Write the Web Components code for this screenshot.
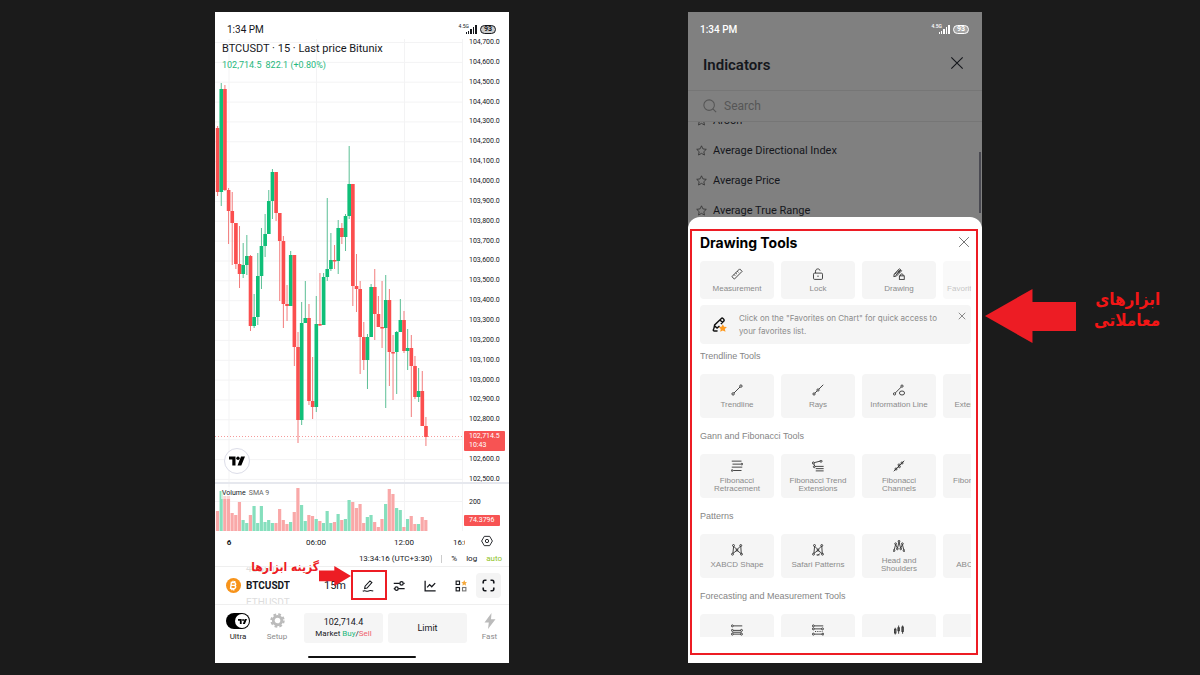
<!DOCTYPE html>
<html lang="en">
<head>
<meta charset="utf-8">
<title>Drawing tools guide</title>
<style>
  body {
    margin: 0;
    background: #1b1b1b;
    font-family: Roboto, "Liberation Sans", sans-serif;
  }
</style>
</head>
<body>
<tools-guide></tools-guide>

<script>
const reset = /*html*/ `
  <style>
    * { box-sizing: border-box; }
    button, input {
      font: inherit;
      color: inherit;
      background: none;
      border: 0;
      padding: 0;
      margin: 0;
      outline: none;
    }
    button { cursor: pointer; }
    svg { display: block; }
  </style>
`;

class BaseElement extends HTMLElement {
  constructor () {
    super();
    this.attachShadow({ mode: 'open' });
  }

  connectedCallback () {
    this.shadowRoot.innerHTML = reset + this.render();
  }

  attr (name, fallback = '') {
    return this.getAttribute(name) || fallback;
  }
}

/* name: markup on a 16 x 16 grid */
const icons = {
  close: '<path d="M1.5 1.5l13 13M14.5 1.5l-13 13"/>',
  search: '<circle cx="7" cy="7" r="6"/><path d="M11.3 11.3L15 15"/>',
  star: '<path d="M8 1.2l2.1 4.5 4.9.6-3.6 3.4.9 4.9L8 12.2l-4.3 2.4.9-4.9L1 6.3l4.9-.6z"/>',
  pen: '<path d="M3.500 11.500l.6-3.200L10.600 1.200l2.600 2.300-6.500 7.200zM1 15c3-2.400 4.600 1.200 7.600-.4 1.600-.9 3.600-.6 6.400 0"/>',
  sliders: '<path d="M1 4.500h8M14 4.500h1.500M1 11.500h1.500M7 11.500h8.500"/><circle cx="11.400" cy="4.500" r="2.200"/><circle cx="4.700" cy="11.500" r="2.200"/>',
  chart: '<path d="M1.500 1v13.500H15.500M4.200 9.800l3.300-3.600 2.800 2.800 4.600-4.800"/>',
  grid: '<rect x="1.500" y="1.500" width="4.500" height="4.500"/><rect x="1.500" y="10" width="4.500" height="4.500"/><rect x="10" y="10" width="4.500" height="4.500" stroke="#777"/><path fill="#f5a83a" stroke="none" d="M12.300 0l1.200 2.600 2.700.3-2 1.900.6 2.700-2.500-1.400-2.400 1.400.5-2.700-2-1.900 2.700-.3z"/>',
  expand: '<path d="M1.500 5.500v-2q0-2 2-2h2M10.500 1.500h2q2 0 2 2v2M14.500 10.500v2q0 2-2 2h-2M5.500 14.500h-2q-2 0-2-2v-2"/>',
  hexagon: '<path d="M4.400 1.800h7.200L15.200 8l-3.600 6.200H4.400L.8 8z"/><circle cx="8" cy="8" r="2.200"/>',
  bolt: '<path fill="currentColor" stroke="none" d="M9.500 0L2.500 9.500h4.300L6 16l7.500-9.800H9z"/>',
  cog: '<circle cx="8" cy="8" r="4.500" stroke-width="3"/><circle cx="8" cy="8" r="6.600" stroke-width="2.200" stroke-dasharray="2.900 2.284"/>',
  ruler: '<path d="M1.200 11.500L11.500 1.200l3.300 3.300L4.500 14.800zM4 8.700l1.600 1.600M6.200 6.500l1.600 1.600M8.400 4.300l1.600 1.600"/>',
  lock: '<rect x="2" y="6.800" width="12" height="8.400" rx="1.500"/><path d="M4.700 6.800V4.300c0-4 5.700-4 6-.7M8 10v2"/>',
  drawlock: '<path d="M1 11.500l.7-3.400L8.500 1l3 2.700-6.800 7zM2.200 8.300l7.600-5.700M3.500 10l7-7.200M6.500 3.500l2.600 2.400"/><rect x="8.500" y="10.500" width="6.500" height="4.700"/><path d="M10 10.500v-1.200c0-2 3.500-2 3.500 0v1.200"/>',
  trendline: '<path d="M4 12l8-8"/><circle cx="2.800" cy="13.200" r="1.600"/><circle cx="13.200" cy="2.800" r="1.600"/>',
  rays: '<path d="M3.800 12.200l3-3M9.200 6.800L15 1"/><circle cx="2.700" cy="13.300" r="1.500"/><circle cx="8" cy="8" r="1.500"/>',
  infoline: '<path d="M3 12l8-8"/><circle cx="2" cy="13.200" r="1.500"/><circle cx="12" cy="2.800" r="1.500"/><ellipse cx="12" cy="12" rx="3.400" ry="2.700"/>',
  retracement: '<path d="M1 1.500h13M2 5.500h11M1 9.500h14M3 14h11"/><circle cx="14.500" cy="5.500" r="1.100"/><circle cx="1.500" cy="14" r="1.100"/>',
  extension: '<path d="M3 3.500L11 1.500M2.500 5l1 3M4 8.500h11.500M5 11.500h10.500M5 14.500h10.500"/><circle cx="1.800" cy="4" r="1.400"/><circle cx="12" cy="1.600" r="1.400"/><circle cx="3" cy="9" r="1.200"/>',
  channels: '<path d="M1 15L15 1"/><circle cx="4" cy="12" r="1.400"/><circle cx="8.500" cy="9" r="1.300"/><circle cx="8" cy="6.500" r="1.300"/><circle cx="12" cy="4" r="1.400"/>',
  xabcd: '<path d="M2.500 12.500L3.500 3l4.500 4.500L13 2.500l.7 10.500L8 8.500z"/><circle cx="2" cy="13.600" r="1.300"/><circle cx="3.300" cy="2" r="1.300"/><circle cx="8" cy="8" r="1.300"/><circle cx="13" cy="2" r="1.300"/><circle cx="14" cy="13.600" r="1.300"/>',
  safari: '<path d="M2.500 12.500L3.500 3l4.500 4.500L13 2.500l.7 10.500L8 8.500zM6 14.500h4M10.500 12.500l-3 3"/><circle cx="2" cy="13.600" r="1.300"/><circle cx="3.300" cy="2" r="1.300"/><circle cx="8" cy="8" r="1.300"/><circle cx="13" cy="2" r="1.300"/><circle cx="14" cy="13.600" r="1.300"/>',
  shoulders: '<path d="M1.500 13.500L3.500 6l2.500 5L8 2.500 10.200 11 12.500 6l2 7.500"/><circle cx="1.300" cy="14.200" r="1.200"/><circle cx="3.500" cy="5" r="1.200"/><circle cx="5.800" cy="11.800" r="1.200"/><circle cx="8" cy="1.700" r="1.200"/><circle cx="10.300" cy="11.800" r="1.200"/><circle cx="12.500" cy="5" r="1.200"/><circle cx="14.700" cy="14.200" r="1.200"/>',
  longpos: '<path d="M3 2.500h12M3 8.500h10M3 13.500h10M2 11h12"/><circle cx="1.800" cy="2.500" r="1.300"/><circle cx="1.800" cy="8.500" r="1.300"/><circle cx="14" cy="8.500" r="1.300"/><circle cx="1.800" cy="13.500" r="1.300"/><circle cx="14" cy="13.500" r="1.300"/>',
  shortpos: '<path d="M3 2.500h12M3 6.500h10M3 13.500h11"/><path stroke-dasharray="1.500 1.500" d="M4 10h10"/><circle cx="1.800" cy="2.500" r="1.300"/><circle cx="1.800" cy="6.500" r="1.300"/><circle cx="14" cy="6.500" r="1.300"/><circle cx="1.800" cy="13.500" r="1.300"/><circle cx="14.500" cy="13.500" r="1.300"/>',
  bars: '<path d="M3 5v9M7.500 2v11M12.800 2v11"/><rect x="2" y="7" width="2" height="5"/><rect x="6.500" y="5" width="2" height="4"/><rect x="11.800" y="4" width="2" height="6"/>',
  favpen: '<path d="M2 12.500l.8-4L10 1.500c1-1 3.500 1 2.800 2.600L9.500 7.500M8.500 3.200l2.800 2.600M3 9.500l2.400 2.300L8 9.500M2 12.500c-2 3 1 2.500 4 2.300"/><path fill="#ff9a1f" stroke="none" d="M11.500 7.600l1.400 2.700 3 .3-2.200 2.100.7 3.100-2.900-1.500-2.700 1.500.5-3.100-2.200-2.100 3-.3z"/>',
  tv: '<path fill="currentColor" stroke="none" d="M0 3.500h6.500v9H3.300V6.600H0zM12 3.500h4l-3.700 9H8.500z"/><circle cx="9" cy="5.200" r="1.700" fill="currentColor" stroke="none"/>',
  bitcoin: '<circle cx="8" cy="8" r="8" fill="#f7931a" stroke="none"/><path stroke="#fff" stroke-width="1.500" d="M5.800 4.200l-1 7.600M5 4.600l3.600.3c2.600.3 2.200 3-.1 3H5.800M8.400 7.900c3 .3 2.400 3.600-.6 3.500L4.300 11M7.500 3v1.600M9.300 3.300v1.500M6.300 11.500v1.600M8.300 11.600v1.600"/>'
};

class UiIcon extends BaseElement {
  render () {
    const size = this.attr('size', '12');
    return /*html*/ `
      <style>:host { display: inline-block; flex: none; } </style>
      <svg width="${size}" height="${size}" viewBox="0 0 16 16" fill="none" stroke="currentColor"
        stroke-width="${this.attr('stroke', '1.2')}" aria-hidden="true">${icons[this.attr('name')]}</svg>
    `;
  }
}
customElements.define('ui-icon', UiIcon);

class BlockArrow extends BaseElement {
  render () {
    const flip = this.attr('direction') === 'right' ? 'transform="rotate(180 46 27)"' : '';
    return /*html*/ `
      <style>
        :host { display: block; flex: none; color: #ed1c24; }
        svg { width: 100%; height: 100%; }
      </style>
      <svg viewBox="0 0 92 54" preserveAspectRatio="none" aria-hidden="true">
        <path ${flip} fill="currentColor" d="M0 27L48 0v13h44v29H48v12z"/>
      </svg>
    `;
  }
}
customElements.define('block-arrow', BlockArrow);

class StatusBar extends BaseElement {
  render () {
    return /*html*/ `
      <style>
        :host {
          display: flex;
          align-items: center;
          justify-content: space-between;
          height: 27px;
          padding: 8px 13px 0 12px;
          font-size: 10px;
          line-height: 14px;
        }
        .right { display: flex; align-items: center; gap: 3px; }
        .signal { display: flex; align-items: flex-end; }
        .net { font-size: 5px; line-height: 5px; align-self: flex-start; margin: -1px -3px 0 0; }
        .battery {
          border: 1px solid currentColor;
          border-radius: 5px;
          padding: 0 3px;
          font-size: 7px;
          font-weight: 700;
          line-height: 7px;
          background: var(--battery, #ccc);
        }
      </style>
      <span>1:34 PM</span>
      <span class="right">
        <span class="signal">
          <span class="net">4.5G</span>
          <svg width="11" height="9" viewBox="0 0 11 9" fill="currentColor" aria-hidden="true">
            <path d="M0 7h1v2H0zM2 6h1v3H2zM4 4h2v5H4zM7 2h1v7H7zM9 0h2v9H9z"/>
          </svg>
        </span>
        <span class="battery">93</span>
      </span>
    `;
  }
}
customElements.define('status-bar', StatusBar);

class PhoneFrame extends BaseElement {
  render () {
    return /*html*/ `
      <style>
        :host {
          display: flex;
          flex-direction: column;
          position: relative;
          overflow: hidden;
          background: #fff;
          color: #15171c;
        }
      </style>
      <slot></slot>
    `;
  }
}
customElements.define('phone-frame', PhoneFrame);

/* high, low, open, close: distance below the top of the pane */
const candles = [
  [87, 157, 89, 153], [44, 167, 153, 50], [46, 152, 50, 151], [149, 205, 151, 172],
  [153, 226, 172, 184], [184, 230, 184, 225], [187, 249, 225, 235], [204, 239, 235, 226],
  [196, 236, 226, 217], [216, 292, 217, 287], [255, 289, 287, 278], [214, 286, 278, 237],
  [189, 250, 237, 207], [175, 218, 207, 195], [151, 195, 195, 162], [130, 180, 162, 133],
  [133, 182, 133, 174], [174, 262, 174, 202], [197, 289, 202, 265], [246, 282, 265, 267],
  [212, 267, 267, 216], [216, 327, 216, 308], [293, 404, 308, 381], [263, 386, 381, 284],
  [242, 284, 284, 279], [265, 366, 279, 362], [318, 380, 362, 368], [257, 373, 368, 285],
  [234, 287, 285, 286], [234, 286, 286, 238], [159, 242, 238, 230], [194, 232, 230, 221],
  [206, 230, 221, 222], [181, 235, 222, 189], [184, 205, 189, 198], [175, 212, 198, 177],
  [107, 180, 177, 145], [145, 267, 145, 247], [215, 273, 247, 250], [242, 335, 250, 298],
  [283, 331, 298, 321], [295, 350, 321, 298], [245, 298, 298, 248], [230, 301, 248, 275],
  [257, 288, 275, 288], [242, 309, 288, 289], [236, 369, 289, 261], [250, 347, 261, 313],
  [296, 361, 313, 314], [292, 355, 313, 293], [260, 293, 293, 281], [272, 314, 281, 312],
  [290, 331, 312, 309], [296, 378, 309, 327], [317, 360, 327, 358], [329, 363, 358, 352],
  [332, 387, 352, 387], [378, 407, 387, 398]
];

const volumes = [
  20, 40, 35, 35, 18, 16, 29, 11, 8, 16, 25, 8, 25, 9, 11, 8, 8, 22, 11, 7,
  9, 19, 43, 26, 10, 16, 15, 12, 10, 8, 20, 8, 9, 17, 11, 12, 31, 29, 23, 27,
  8, 14, 16, 9, 4, 12, 27, 42, 37, 23, 21, 4, 12, 15, 7, 7, 14, 11
];

const STEP = 3.655;
const FIRST = 2.6;

class PriceChart extends BaseElement {
  candleMarkup () {
    return candles.map(([high, low, open, close], i) => {
      const x = FIRST + i * STEP;
      const color = close < open ? '#0fbf78' : '#fb4e4e';
      const wick = close < open ? '#5bbf95' : '#f27c7c';
      const top = Math.min(open, close);
      const height = Math.max(1.5, Math.abs(close - open));
      return `<path stroke="${wick}" d="M${x} ${high}V${low}"/>
        <rect x="${x - 1.8}" y="${top}" width="3.655" height="${height}" fill="${color}"/>`;
    }).join('');
  }

  volumeMarkup () {
    return volumes.map((v, i) => {
      const [, , open, close] = candles[i];
      const color = close < open ? '#85dfbd' : '#f9a8a8';
      return `<rect x="${FIRST + i * STEP - 1.7}" y="${47 - v}" width="3.200" height="${v}" fill="${color}"/>`;
    }).join('');
  }

  priceLabels () {
    let out = '';
    for (let p = 104700; p >= 102500; p -= 100) {
      out += `<span>${p.toLocaleString('en-US')}.0</span>`;
    }
    return out;
  }

  gridLines () {
    let out = '';
    for (let i = 0; i < 23; i++) {
      out += `M0 ${(3.5 + i * 19.86).toFixed(1)}H248`;
    }
    return out;
  }

  render () {
    return /*html*/ `
      <style>
        :host { display: block; position: relative; font-size: 8px; line-height: 12px; }
        .pane { display: grid; grid-template-columns: 1fr 46px; position: relative; }
        .pane svg { width: 100%; height: 100%; }
        .price { height: 445px; border-bottom: 2px solid #e6e8ee; }
        .volume { height: 49px; }
        .plot { min-width: 0; height: 100%; overflow: hidden; }
        .axis {
          display: flex;
          flex-direction: column;
          justify-content: space-between;
          padding-left: 6px;
          margin: -3px 0;
          font-size: 7px;
        }
        .legend { position: absolute; left: 7px; top: 3px; }
        .symbol { font-size: 11px; line-height: 14px; }
        .change { color: #27b87d; font-size: 9px; line-height: 18px; display: flex; gap: 4px; }
        .tag {
          position: absolute;
          right: 4px;
          width: 41px;
          padding: 1px 5px;
          background: #f75353;
          color: #fff;
          line-height: 9px;
          font-size: 7px;
          border-radius: 1px;
        }
        .last { top: 392px; }
        .vol { right: 9px; width: 36px; top: 31px; }
        .brand {
          position: absolute;
          left: 9px;
          bottom: 8px;
          width: 26px;
          height: 26px;
          border: 1px solid #dcdde8;
          border-radius: 50%;
          background: #fff;
          display: grid;
          place-items: center;
          color: #000;
        }
        .study {
          position: absolute;
          left: 6px;
          top: 3px;
          padding: 0 1px;
          background: rgba(255,255,255,.5);
          color: #666;
          display: flex;
          gap: 3px;
          font-size: 7px;
        }
        .study b { font-weight: 400; color: #15171c; }
        .volume .axis { margin: 0; padding-top: 12px; justify-content: flex-start; }
        .time {
          display: grid;
          grid-template-columns: 28px 146px 30px 1fr 44px;
          align-items: center;
          text-align: center;
          height: 19px;
          white-space: nowrap;
        }
        .time .cut { overflow: hidden; padding-left: 34px; text-align: left; }
        .time button { justify-self: center; }
        .zone {
          display: flex;
          justify-content: flex-end;
          align-items: center;
          gap: 9px;
          height: 15px;
          padding-right: 7px;
          border-bottom: 1px solid #efefef;
        }
        .zone i { width: 1px; height: 8px; background: #ccc; }
        .zone .on { color: #8fc31f; }
      </style>
      <div class="pane price">
        <div class="plot">
          <svg viewBox="0 0 248 443" preserveAspectRatio="none" role="img" aria-label="BTCUSDT candles">
            <path stroke="#f3f3f4" d="${this.gridLines()}M14 0V443M101.500 0V443M189.500 0V443M247.500 0V443" fill="none"/>
            <path stroke="#f59a9a" stroke-dasharray="1 2" d="M0 397.500H248"/>
            ${this.candleMarkup()}
          </svg>
        </div>
        <div class="axis">${this.priceLabels()}</div>
        <div class="legend">
          <div class="symbol">BTCUSDT · 15 · Last price Bitunix</div>
          <div class="change"><span>102,714.5</span><span>822.1 (+0.80%)</span></div>
        </div>
        <div class="brand"><ui-icon name="tv" size="16"></ui-icon></div>
        <div class="tag last">102,714.5<br>10:43</div>
      </div>
      <div class="pane volume">
        <div class="plot">
          <svg viewBox="0 0 248 49" preserveAspectRatio="none" role="img" aria-label="Volume">
            <path stroke="#f3f3f4" d="M0 17.500H248M14 0V47M101.500 0V47M189.500 0V47M247.500 0V47" fill="none"/>
            ${this.volumeMarkup()}
          </svg>
        </div>
        <div class="axis"><span>200</span></div>
        <div class="study"><b>Volume</b><span>SMA 9</span></div>
        <div class="tag vol">74.3796</div>
      </div>
      <div class="time">
        <b>6</b><span>06:00</span><span>12:00</span><span class="cut">16:00</span>
        <button type="button" aria-label="Chart settings"><ui-icon name="hexagon" size="12"></ui-icon></button>
      </div>
      <div class="zone">
        <span>13:34:16 (UTC+3:30)</span><i></i>
        <button type="button">%</button><button type="button">log</button>
        <button type="button" class="on">auto</button>
      </div>
    `;
  }
}
customElements.define('price-chart', PriceChart);

class ChartToolbar extends BaseElement {
  render () {
    return /*html*/ `
      <style>
        :host {
          display: flex;
          align-items: center;
          justify-content: space-between;
          height: 38px;
          padding: 0 8px 0 11px;
          border-bottom: 1px solid #efefef;
        }
        .pair { display: flex; align-items: center; gap: 5px; height: 37px; overflow: hidden; }
        .wheel { display: flex; flex-direction: column; justify-content: center; font-size: 10px; line-height: 17px; text-align: left; }
        .wheel span { color: #ddd; }
        .tools { display: flex; align-items: center; }
        .tools button { width: 31px; height: 25px; display: grid; place-items: center; }
        .tools .frame { font-size: 11px; width: 34px; }
        .tools .full { background: #f4f4f4; border-radius: 4px; width: 25px; }
      </style>
      <button type="button" class="pair">
        <ui-icon name="bitcoin" size="15"></ui-icon>
        <div class="wheel"><span>4USDT</span><b>BTCUSDT</b><span>ETHUSDT</span></div>
      </button>
      <div class="tools">
        <button type="button" class="frame">15m</button>
        <button type="button" aria-label="Drawing tools"><ui-icon name="pen" size="12" stroke="1.4"></ui-icon></button>
        <button type="button" aria-label="Indicators"><ui-icon name="sliders" size="12" stroke="1.7"></ui-icon></button>
        <button type="button" aria-label="Chart type"><ui-icon name="chart" size="12" stroke="1.7"></ui-icon></button>
        <button type="button" aria-label="Layout"><ui-icon name="grid" size="12" stroke="1.5"></ui-icon></button>
        <button type="button" class="full" aria-label="Full screen"><ui-icon name="expand" size="13" stroke="2"></ui-icon></button>
      </div>
    `;
  }
}
customElements.define('chart-toolbar', ChartToolbar);

class OrderBar extends BaseElement {
  render () {
    return /*html*/ `
      <style>
        :host {
          display: grid;
          grid-template-columns: 24px 44px 1fr 1fr 35px;
          column-gap: 5px;
          padding: 8px 2px 5px 11px;
          font-size: 8px;
          line-height: 12px;
        }
        .small {
          display: flex;
          flex-direction: column;
          align-items: center;
          justify-content: space-between;
          height: 30px;
          color: #8c8c8c;
        }
        .small ui-icon { color: #bbb; }
        .ultra { color: #222; }
        .toggle {
          width: 24px;
          height: 16px;
          border-radius: 8px;
          background: #000;
          display: flex;
          justify-content: flex-end;
          padding: 1px;
        }
        .knob { width: 14px; height: 14px; border-radius: 50%; background: #fff; display: grid; place-items: center; }
        .toggle ui-icon { color: #000; }
        .order { background: #f5f5f5; border-radius: 3px; height: 30px; }
        .amount, .limit { font-size: 9px; }
        .buy { color: #23b77b; }
        .sell { color: #f0616d; }
        .home {
          grid-column: 1 / -1;
          justify-self: center;
          width: 108px;
          height: 2px;
          margin: 13px 9px 0 0;
          border-radius: 1px;
          background: #111;
        }
      </style>
      <button type="button" class="small ultra">
        <span class="toggle"><span class="knob"><ui-icon name="tv" size="9"></ui-icon></span></span>Ultra
      </button>
      <button type="button" class="small"><ui-icon name="cog" size="15"></ui-icon>Setup</button>
      <button type="button" class="order">
        <div class="amount">102,714.4</div>
        <div>Market <span class="buy">Buy</span>/<span class="sell">Sell</span></div>
      </button>
      <button type="button" class="order limit">Limit</button>
      <button type="button" class="small"><ui-icon name="bolt" size="16"></ui-icon>Fast</button>
      <span class="home"></span>
    `;
  }
}
customElements.define('order-bar', OrderBar);

/* red box, arrow and note laid over the toolbar */
class ToolsCallout extends BaseElement {
  render () {
    return /*html*/ `
      <style>
        :host {
          position: absolute;
          right: 122px;
          top: 547px;
          display: flex;
          align-items: flex-start;
        }
        .note {
          color: #ed1c24;
          font: 700 12px/16px "DejaVu Sans Condensed", "DejaVu Sans", sans-serif;
          white-space: nowrap;
        }
        block-arrow { width: 32px; height: 20px; margin-top: 7px; }
        .box { width: 36px; height: 30px; border: 2px solid #ed1c24; margin-top: 11px; }
      </style>
      <span class="note" dir="rtl" lang="fa"><slot></slot></span>
      <block-arrow direction="right"></block-arrow>
      <span class="box"></span>
    `;
  }
}
customElements.define('tools-callout', ToolsCallout);

class IndicatorList extends BaseElement {
  render () {
    const rows = ['Aroon', 'Average Directional Index', 'Average Price', 'Average True Range'];
    return /*html*/ `
      <style>
        :host { display: block; position: relative; }
        header {
          display: flex;
          align-items: center;
          justify-content: space-between;
          height: 52px;
          padding: 0 18px 0 15px;
          border-bottom: 1px solid #767676;
        }
        h2 { margin: 0; font-size: 15px; line-height: 18px; font-weight: 600; }
        label {
          display: flex;
          align-items: center;
          gap: 7px;
          height: 31px;
          padding: 0 15px;
          border-bottom: 1px solid #767676;
          color: #555;
        }
        input { flex: 1; min-width: 0; font-size: 12px; line-height: 16px; }
        input::placeholder { color: #565656; opacity: 1; }
        ul { margin: 0; padding: 0; list-style: none; height: 95px; overflow: hidden; }
        li {
          display: flex;
          align-items: center;
          gap: 6px;
          height: 30px;
          padding-left: 8px;
          font-size: 11px;
        }
        li:first-child { margin-top: -17px; }
        li ui-icon { color: #333; }
        .thumb { position: absolute; right: 1px; top: 113px; width: 2px; height: 61px; background: #4a4a52; }
      </style>
      <header>
        <h2>Indicators</h2>
        <button type="button" aria-label="Close"><ui-icon name="close" size="14" stroke="1.3"></ui-icon></button>
      </header>
      <label><ui-icon name="search" size="14"></ui-icon><input type="text" placeholder="Search" aria-label="Search"></label>
      <ul>${rows.map(r => `<li><ui-icon name="star" size="11"></ui-icon>${r}</li>`).join('')}</ul>
      <span class="thumb"></span>
    `;
  }
}
customElements.define('indicator-list', IndicatorList);

class ToolTile extends BaseElement {
  render () {
    const icon = this.attr('icon');
    return /*html*/ `
      <style>
        :host { display: block; flex: 0 0 74px; }
        button {
          display: flex;
          flex-direction: column;
          align-items: center;
          justify-content: center;
          gap: 5px;
          width: 100%;
          height: var(--tile-height, 44px);
          background: #f5f5f5;
          border-radius: 4px;
          color: #8b8b8b;
          font-size: 8px;
          line-height: 8px;
          white-space: nowrap;
        }
        ui-icon, .blank { color: #333; height: 12px; }
        .label { min-height: 8px; }
      </style>
      <button type="button">
        ${icon ? `<ui-icon name="${icon}" size="12"></ui-icon>` : '<span class="blank"></span>'}
        <span class="label"><slot></slot></span>
      </button>
    `;
  }
}
customElements.define('tool-tile', ToolTile);

class ToolSection extends BaseElement {
  render () {
    const heading = this.attr('heading');
    return /*html*/ `
      <style>
        :host { display: block; }
        h3 {
          margin: 0;
          padding: 12px 0;
          font-size: 9px;
          line-height: 12px;
          font-weight: 400;
          color: #858585;
        }
        .row { display: flex; gap: 7px; overflow: hidden; }
      </style>
      ${heading ? `<h3>${heading}</h3>` : ''}
      <div class="row"><slot></slot></div>
    `;
  }
}
customElements.define('tool-section', ToolSection);

class DrawingSheet extends BaseElement {
  render () {
    return /*html*/ `
      <style>
        :host {
          display: block;
          flex: 1;
          position: relative;
          padding: 15px 11px 26px 12px;
          border-radius: 12px 12px 0 0;
          background: #fff;
          font-family: "Liberation Sans", Arial, sans-serif;
        }
        header { display: flex; align-items: center; justify-content: space-between; height: 22px; padding-right: 1px; margin-bottom: 7px; }
        h2, .tip { font-family: Inter, sans-serif; }
        h2 { margin: 0; font-size: 14px; line-height: 18px; font-weight: 700; color: #000; }
        .quick { --tile-height: 38px; }
        .quick :last-child { opacity: .5; }
        .tip {
          display: flex;
          align-items: center;
          gap: 12px;
          height: 39px;
          margin-top: 6px;
          padding: 0 5px 0 12px;
          background: #f5f5f5;
          border-radius: 4px;
          font-size: 8px;
          line-height: 13px;
          color: #8b8b8b;
        }
        .tip p { margin: 0; flex: 1; white-space: nowrap; }
        .tip ui-icon { color: #111; }
        .tip button { align-self: flex-start; margin-top: 6px; }
        .tip button ui-icon, header ui-icon { color: #666; }
        .scroll { height: 299px; margin-top: -6px; overflow: hidden; }
        .mark { position: absolute; inset: 12px 4px 8px 2px; border: 2px solid #ed1c24; pointer-events: none; }
      </style>
      <header>
        <h2>Drawing Tools</h2>
        <button type="button" aria-label="Close"><ui-icon name="close" size="12"></ui-icon></button>
      </header>
      <tool-section class="quick">
        <tool-tile icon="ruler">Measurement</tool-tile>
        <tool-tile icon="lock">Lock</tool-tile>
        <tool-tile icon="drawlock">Drawing</tool-tile>
        <tool-tile>Favorites on Chart</tool-tile>
      </tool-section>
      <div class="tip">
        <ui-icon name="favpen" size="15" stroke="1.5"></ui-icon>
        <p>Click on the "Favorites on Chart" for quick access to<br>your favorites list.</p>
        <button type="button" aria-label="Dismiss"><ui-icon name="close" size="8" stroke="1.5"></ui-icon></button>
      </div>
      <div class="scroll">
        <tool-section heading="Trendline Tools">
          <tool-tile icon="trendline">Trendline</tool-tile>
          <tool-tile icon="rays">Rays</tool-tile>
          <tool-tile icon="infoline">Information Line</tool-tile>
          <tool-tile>Extended Line</tool-tile>
        </tool-section>
        <tool-section heading="Gann and Fibonacci Tools">
          <tool-tile icon="retracement">Fibonacci<br>Retracement</tool-tile>
          <tool-tile icon="extension">Fibonacci Trend<br>Extensions</tool-tile>
          <tool-tile icon="channels">Fibonacci<br>Channels</tool-tile>
          <tool-tile>Fibonacci Time<br>Zone</tool-tile>
        </tool-section>
        <tool-section heading="Patterns">
          <tool-tile icon="xabcd">XABCD Shape</tool-tile>
          <tool-tile icon="safari">Safari Patterns</tool-tile>
          <tool-tile icon="shoulders">Head and<br>Shoulders</tool-tile>
          <tool-tile>ABCD Shape</tool-tile>
        </tool-section>
        <tool-section heading="Forecasting and Measurement Tools">
          <tool-tile icon="longpos"></tool-tile>
          <tool-tile icon="shortpos"></tool-tile>
          <tool-tile icon="bars"></tool-tile>
          <tool-tile></tool-tile>
        </tool-section>
      </div>
      <div class="mark"></div>
    `;
  }
}
customElements.define('drawing-sheet', DrawingSheet);

class ToolsGuide extends BaseElement {
  render () {
    return /*html*/ `
      <style>
        :host {
          display: grid;
          grid-template-columns: 215fr 294px 179fr 294px 218fr;
          padding: 12px 0;
        }
        .chart { grid-column: 2; }
        .sheet { grid-column: 4; background: #808080; }
        .sheet status-bar { color: #fff; --battery: #a5a5a5; font-weight: 500; }
        .side {
          grid-column: 5;
          display: flex;
          align-items: flex-start;
          gap: 18px;
          padding: 277px 0 0 3px;
        }
        .side block-arrow { width: 91px; height: 54px; }
        .side p {
          margin: 0;
          color: #f21616;
          font: 700 17px/21px "DejaVu Sans Condensed", "DejaVu Sans", sans-serif;
          white-space: nowrap;
        }
      </style>
      <phone-frame class="chart">
        <status-bar></status-bar>
        <price-chart></price-chart>
        <chart-toolbar></chart-toolbar>
        <order-bar></order-bar>
        <tools-callout>گزینه ابزارها</tools-callout>
      </phone-frame>
      <phone-frame class="sheet">
        <status-bar></status-bar>
        <indicator-list></indicator-list>
        <drawing-sheet></drawing-sheet>
      </phone-frame>
      <div class="side">
        <block-arrow></block-arrow>
        <p dir="rtl" lang="fa">ابزارهای<br>معاملاتی</p>
      </div>
    `;
  }
}
customElements.define('tools-guide', ToolsGuide);
</script>
</body>
</html>
